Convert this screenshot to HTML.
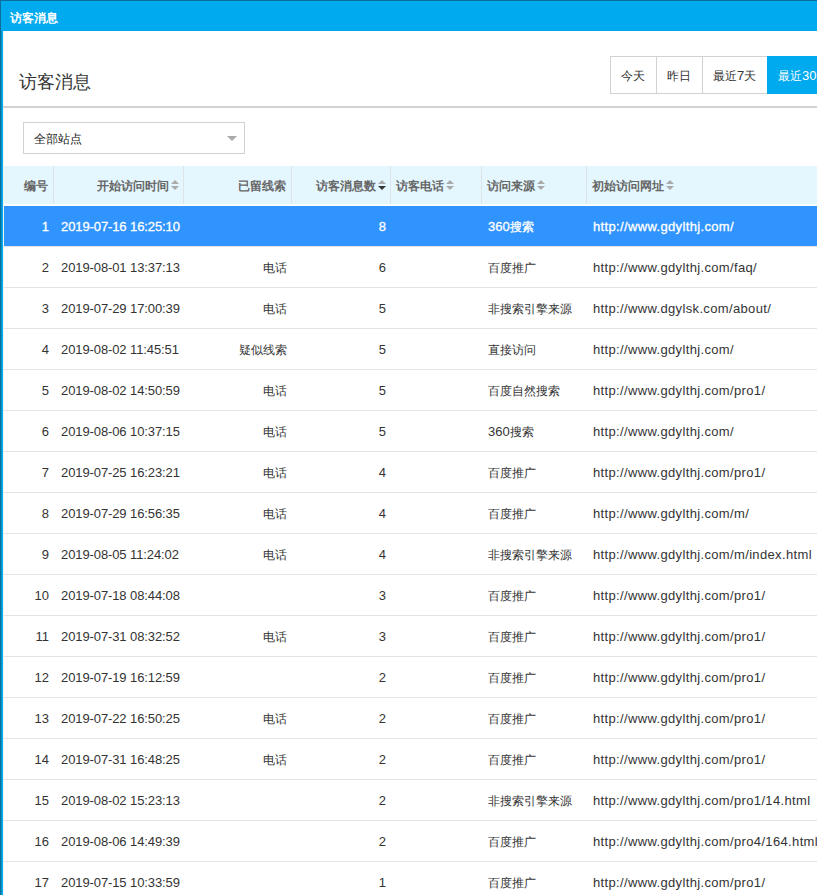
<!DOCTYPE html>
<html><head><meta charset="utf-8">
<style>
*{margin:0;padding:0;box-sizing:border-box}
html,body{width:817px;height:895px;overflow:hidden;background:#fff;font-family:"Liberation Sans",sans-serif;color:#333;position:relative}
.abs{position:absolute}
#tb{position:absolute;left:0;top:0;width:817px;height:895px;background:#00aaee}
#dk1{position:absolute;left:0;top:0;width:817px;height:1px;background:#0a6f9a}
#dk2{position:absolute;left:0;top:0;width:1px;height:895px;background:#0a6f9a}
#dk3{position:absolute;left:1px;top:31px;width:1px;height:864px;background:#0596d0}
#x3{position:absolute;left:3px;top:31px;width:1px;height:864px;background:#f3f3f3}
#ttl{position:absolute;left:10px;top:10px;color:#fff;font-size:12px;font-weight:bold;line-height:16px;white-space:nowrap}
#main{position:absolute;left:3px;top:31px;width:814px;height:864px;background:#fff}
#h1{position:absolute;left:19px;top:71px;font-size:18px;line-height:22px;color:#333;white-space:nowrap}
.btn{position:absolute;top:56px;height:38px;border:1px solid #d2d2d2;border-right:none;font-size:12px;line-height:38px;color:#333;background:#fff;white-space:nowrap;padding-left:10px}
.btn.on{background:#00aaee;color:#fff;border-color:#00aaee}
.btn .l{font-size:13px}
#line{position:absolute;left:3px;top:106px;width:814px;height:2px;background:#d2d2d2}
#selbox{position:absolute;left:23px;top:122px;width:222px;height:32px;border:1px solid #d2d2d2;font-size:12px;line-height:32px;padding-left:10px;color:#222;white-space:nowrap}
#tri{position:absolute;left:227px;top:136px;width:0;height:0;border-left:5px solid transparent;border-right:5px solid transparent;border-top:5px solid #aaa}
#thead{position:absolute;left:4px;top:166px;width:813px;height:38px;background:#e4f6fe}
.sep{position:absolute;top:166px;width:1px;height:38px;background:#dde3e6}
.th{position:absolute;top:167px;height:38px;line-height:38px;font-size:12px;font-weight:bold;color:#666;white-space:nowrap}
.sort{display:inline-block;width:8px;height:11px;position:relative;vertical-align:middle;margin-left:2px;top:-1px}
.sort i{position:absolute;left:0;width:0;height:0;border-left:4px solid transparent;border-right:4px solid transparent}
.sort .up{top:0;border-bottom:4px solid #aaa}
.sort .dn{top:6px;border-top:4px solid #aaa}
.sort.act .dn{border-top-color:#333}
.row{position:absolute;left:4px;width:813px;height:40px;background:#fff}
.row.sel{background:#3094fe}
.row.sel .c{color:#fff;-webkit-text-stroke:0.3px #fff}
.bl{position:absolute;left:4px;width:813px;height:1px;background:#e4e4e4}
.c{position:absolute;top:1px;height:40px;line-height:40px;font-size:12px;color:#333;white-space:nowrap}
.l{font-size:13px}
.u{letter-spacing:0.35px}
.c1{right:768px;text-align:right}
.c2{left:57px;letter-spacing:-0.1px}
.c3{right:530px;text-align:right}
.c4{right:431px;text-align:right}
.c6{left:484px}
.c7{left:589px}
</style></head><body>
<div id="tb"></div><div id="dk1"></div><div id="dk2"></div>
<div id="ttl">访客消息</div>
<div id="main"></div><div id="dk3"></div><div id="x3"></div><div id="tbl" style="position:absolute;left:3px;top:30px;width:814px;height:1px;background:#02a7ea"></div>
<div id="h1">访客消息</div>
<div class="btn" style="left:610px;width:46px">今天</div>
<div class="btn" style="left:656px;width:46px">昨日</div>
<div class="btn" style="left:702px;width:65px">最近<span class="l">7</span>天</div>
<div class="btn on" style="left:767px;width:80px">最近<span class="l">30</span>天</div>
<div id="line"></div>
<div id="selbox">全部站点</div><div id="tri"></div>
<div id="thead"></div>
<div class="sep" style="left:53px"></div>
<div class="sep" style="left:183px"></div>
<div class="sep" style="left:291px"></div>
<div class="sep" style="left:390px"></div>
<div class="sep" style="left:481px"></div>
<div class="sep" style="left:586px"></div>
<div class="th" style="left:0;width:48px;text-align:right">编号</div>
<div class="th" style="left:0;width:179px;text-align:right">开始访问时间<span class="sort"><i class="up"></i><i class="dn"></i></span></div>
<div class="th" style="left:0;width:286px;text-align:right">已留线索</div>
<div class="th" style="left:0;width:386px;text-align:right">访客消息数<span class="sort act"><i class="up"></i><i class="dn"></i></span></div>
<div class="th" style="left:396px">访客电话<span class="sort"><i class="up"></i><i class="dn"></i></span></div>
<div class="th" style="left:487px">访问来源<span class="sort"><i class="up"></i><i class="dn"></i></span></div>
<div class="th" style="left:592px">初始访问网址<span class="sort"><i class="up"></i><i class="dn"></i></span></div>
<div class="row sel" style="top:206px"><span class="c c1 l">1</span><span class="c c2 l">2019-07-16 16:25:10</span><span class="c c3"></span><span class="c c4 l">8</span><span class="c c6"><span class="l">360</span>搜索</span><span class="c c7 l u">http://www.gdylthj.com/</span></div>
<div class="bl" style="top:246px"></div>
<div class="row" style="top:247px"><span class="c c1 l">2</span><span class="c c2 l">2019-08-01 13:37:13</span><span class="c c3">电话</span><span class="c c4 l">6</span><span class="c c6">百度推广</span><span class="c c7 l u">http://www.gdylthj.com/faq/</span></div>
<div class="bl" style="top:287px"></div>
<div class="row" style="top:288px"><span class="c c1 l">3</span><span class="c c2 l">2019-07-29 17:00:39</span><span class="c c3">电话</span><span class="c c4 l">5</span><span class="c c6">非搜索引擎来源</span><span class="c c7 l u">http://www.dgylsk.com/about/</span></div>
<div class="bl" style="top:328px"></div>
<div class="row" style="top:329px"><span class="c c1 l">4</span><span class="c c2 l">2019-08-02 11:45:51</span><span class="c c3">疑似线索</span><span class="c c4 l">5</span><span class="c c6">直接访问</span><span class="c c7 l u">http://www.gdylthj.com/</span></div>
<div class="bl" style="top:369px"></div>
<div class="row" style="top:370px"><span class="c c1 l">5</span><span class="c c2 l">2019-08-02 14:50:59</span><span class="c c3">电话</span><span class="c c4 l">5</span><span class="c c6">百度自然搜索</span><span class="c c7 l u">http://www.gdylthj.com/pro1/</span></div>
<div class="bl" style="top:410px"></div>
<div class="row" style="top:411px"><span class="c c1 l">6</span><span class="c c2 l">2019-08-06 10:37:15</span><span class="c c3">电话</span><span class="c c4 l">5</span><span class="c c6"><span class="l">360</span>搜索</span><span class="c c7 l u">http://www.gdylthj.com/</span></div>
<div class="bl" style="top:451px"></div>
<div class="row" style="top:452px"><span class="c c1 l">7</span><span class="c c2 l">2019-07-25 16:23:21</span><span class="c c3">电话</span><span class="c c4 l">4</span><span class="c c6">百度推广</span><span class="c c7 l u">http://www.gdylthj.com/pro1/</span></div>
<div class="bl" style="top:492px"></div>
<div class="row" style="top:493px"><span class="c c1 l">8</span><span class="c c2 l">2019-07-29 16:56:35</span><span class="c c3">电话</span><span class="c c4 l">4</span><span class="c c6">百度推广</span><span class="c c7 l u">http://www.gdylthj.com/m/</span></div>
<div class="bl" style="top:533px"></div>
<div class="row" style="top:534px"><span class="c c1 l">9</span><span class="c c2 l">2019-08-05 11:24:02</span><span class="c c3">电话</span><span class="c c4 l">4</span><span class="c c6">非搜索引擎来源</span><span class="c c7 l u">http://www.gdylthj.com/m/index.html</span></div>
<div class="bl" style="top:574px"></div>
<div class="row" style="top:575px"><span class="c c1 l">10</span><span class="c c2 l">2019-07-18 08:44:08</span><span class="c c3"></span><span class="c c4 l">3</span><span class="c c6">百度推广</span><span class="c c7 l u">http://www.gdylthj.com/pro1/</span></div>
<div class="bl" style="top:615px"></div>
<div class="row" style="top:616px"><span class="c c1 l">11</span><span class="c c2 l">2019-07-31 08:32:52</span><span class="c c3">电话</span><span class="c c4 l">3</span><span class="c c6">百度推广</span><span class="c c7 l u">http://www.gdylthj.com/pro1/</span></div>
<div class="bl" style="top:656px"></div>
<div class="row" style="top:657px"><span class="c c1 l">12</span><span class="c c2 l">2019-07-19 16:12:59</span><span class="c c3"></span><span class="c c4 l">2</span><span class="c c6">百度推广</span><span class="c c7 l u">http://www.gdylthj.com/pro1/</span></div>
<div class="bl" style="top:697px"></div>
<div class="row" style="top:698px"><span class="c c1 l">13</span><span class="c c2 l">2019-07-22 16:50:25</span><span class="c c3">电话</span><span class="c c4 l">2</span><span class="c c6">百度推广</span><span class="c c7 l u">http://www.gdylthj.com/pro1/</span></div>
<div class="bl" style="top:738px"></div>
<div class="row" style="top:739px"><span class="c c1 l">14</span><span class="c c2 l">2019-07-31 16:48:25</span><span class="c c3">电话</span><span class="c c4 l">2</span><span class="c c6">百度推广</span><span class="c c7 l u">http://www.gdylthj.com/pro1/</span></div>
<div class="bl" style="top:779px"></div>
<div class="row" style="top:780px"><span class="c c1 l">15</span><span class="c c2 l">2019-08-02 15:23:13</span><span class="c c3"></span><span class="c c4 l">2</span><span class="c c6">非搜索引擎来源</span><span class="c c7 l u">http://www.gdylthj.com/pro1/14.html</span></div>
<div class="bl" style="top:820px"></div>
<div class="row" style="top:821px"><span class="c c1 l">16</span><span class="c c2 l">2019-08-06 14:49:39</span><span class="c c3"></span><span class="c c4 l">2</span><span class="c c6">百度推广</span><span class="c c7 l u">http://www.gdylthj.com/pro4/164.html</span></div>
<div class="bl" style="top:861px"></div>
<div class="row" style="top:862px"><span class="c c1 l">17</span><span class="c c2 l">2019-07-15 10:33:59</span><span class="c c3"></span><span class="c c4 l">1</span><span class="c c6">百度推广</span><span class="c c7 l u">http://www.gdylthj.com/pro1/</span></div>
<div class="bl" style="top:902px"></div>
</body></html>
